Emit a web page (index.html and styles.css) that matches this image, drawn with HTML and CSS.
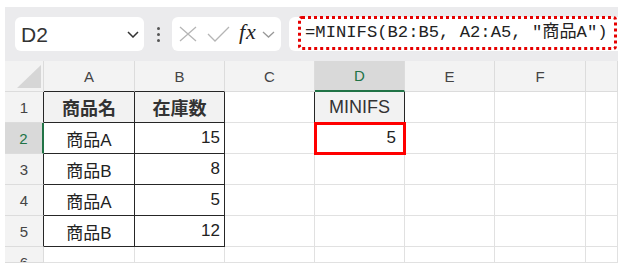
FILE: index.html
```html
<!DOCTYPE html>
<html lang="ja">
<head>
    <meta charset="UTF-8">
    <title>MINIFS</title>
    <link rel="stylesheet" href="styles.css">
</head>
<body>
    <div class="frame">
        <div class="toolbar">
            <div class="name-box">
                <span class="name-text">D2</span>
                <svg class="chev" width="12" height="7" viewBox="0 0 12 7"><path d="M1 1l5 5 5-5" fill="none" stroke="#333" stroke-width="1.5"/></svg>
            </div>
            <div class="dots"><i></i><i></i><i></i></div>
            <div class="fx-box">
                <svg width="20" height="16" viewBox="0 0 20 16"><path d="M2 1l16 14M18 1L2 15" fill="none" stroke="#b5b5b5" stroke-width="1.3"/></svg>
                <svg width="23" height="16" viewBox="0 0 23 16"><path d="M1 8l7 7L22 1" fill="none" stroke="#b5b5b5" stroke-width="1.3"/></svg>
                <span class="fx">fx</span>
                <svg width="13" height="7" viewBox="0 0 13 7"><path d="M1 1l5.5 5 5.5-5" fill="none" stroke="#999" stroke-width="1.3"/></svg>
            </div>
            <div class="formula-bar">
                <div class="formula">=MINIFS(B2:B5, A2:A5, "商品A")</div>
            </div>
        </div>

        <div class="sheet">
            <!-- 列見出し -->
            <div class="hd corner"><div class="tri"></div></div>
            <div class="hd dark-b">A</div>
            <div class="hd dark-b">B</div>
            <div class="hd">C</div>
            <div class="hd sel-col">D</div>
            <div class="hd">E</div>
            <div class="hd">F</div>
            <div class="hd"></div>

            <!-- 1行目 -->
            <div class="rh dark-r">1</div>
            <div class="c t head bold">商品名</div>
            <div class="c t head bold">在庫数</div>
            <div class="c dark-r"></div>
            <div class="c t head">MINIFS</div>
            <div class="c"></div>
            <div class="c"></div>
            <div class="c"></div>

            <!-- 2行目 -->
            <div class="rh sel-row">2</div>
            <div class="c t">商品A</div>
            <div class="c t num">15</div>
            <div class="c"></div>
            <div class="c num result">5</div>
            <div class="c"></div>
            <div class="c"></div>
            <div class="c"></div>

            <!-- 3行目 -->
            <div class="rh dark-r">3</div>
            <div class="c t">商品B</div>
            <div class="c t num">8</div>
            <div class="c"></div>
            <div class="c"></div>
            <div class="c"></div>
            <div class="c"></div>
            <div class="c"></div>

            <!-- 4行目 -->
            <div class="rh dark-r">4</div>
            <div class="c t">商品A</div>
            <div class="c t num">5</div>
            <div class="c"></div>
            <div class="c"></div>
            <div class="c"></div>
            <div class="c"></div>
            <div class="c"></div>

            <!-- 5行目 -->
            <div class="rh dark-r">5</div>
            <div class="c t">商品B</div>
            <div class="c t num">12</div>
            <div class="c"></div>
            <div class="c"></div>
            <div class="c"></div>
            <div class="c"></div>
            <div class="c"></div>

            <!-- 6行目 (途中まで) -->
            <div class="rh last">6</div>
            <div class="c"></div>
            <div class="c"></div>
            <div class="c"></div>
            <div class="c"></div>
            <div class="c"></div>
            <div class="c"></div>
            <div class="c"></div>
        </div>
    </div>
</body>
</html>
```

FILE: styles.css
```css
body {
    margin: 0;
    padding: 7px 0 0 5px;
    background-color: #ffffff;
    font-family: 'Liberation Sans', 'Noto Sans CJK JP', sans-serif;
    color: #222222;
}

.frame {
    width: 613px;
}

/* ツールバー */
.toolbar {
    display: flex;
    align-items: center;
    height: 54px;
    padding-left: 10px;
    background-color: #ebebed;
    box-sizing: border-box;
}

.name-box {
    display: flex;
    align-items: center;
    justify-content: space-between;
    width: 129px;
    height: 34px;
    padding: 0 5px 0 6px;
    background-color: #ffffff;
    border-radius: 6px;
    box-sizing: border-box;
}

.name-text {
    font-size: 21px;
    color: #333333;
    margin-top: 1px;
}

.dots {
    display: flex;
    flex-direction: column;
    gap: 3px;
    width: 28px;
    align-items: center;
}

.dots i {
    display: block;
    width: 3px;
    height: 3px;
    border-radius: 50%;
    background-color: #555555;
}

.fx-box {
    display: flex;
    align-items: center;
    gap: 9px;
    width: 109px;
    height: 34px;
    padding-left: 6px;
    background-color: #ffffff;
    border-radius: 6px;
    box-sizing: border-box;
}

.fx {
    font-family: 'Liberation Serif', serif;
    font-style: italic;
    font-size: 22px;
    color: #222222;
    margin: -4px -4px 0 0;
    letter-spacing: 1px;
}

.formula-bar {
    flex: 1;
    height: 34px;
    margin-left: 8px;
    padding-left: 9px;
    background-color: #ffffff;
    border-radius: 6px 0 0 6px;
    box-sizing: border-box;
}

.formula {
    height: 34px;
    margin-top: -1px;
    margin-right: 1px;
    padding-left: 4px;
    border: 3px dotted #e60000;
    border-radius: 4px;
    box-sizing: border-box;
    font-family: 'Liberation Mono', 'Noto Sans CJK JP', monospace;
    font-size: 17.2px;
    line-height: 27px;
    color: #222222;
    white-space: nowrap;
}

/* シート */
.sheet {
    display: grid;
    grid-template-columns: 39px 91px 90px 90px 90px 90px 91px 32px;
    grid-template-rows: repeat(6, 31px) 16px;
    background-color: #ffffff;
}

.hd,
.rh,
.c {
    display: flex;
    align-items: center;
    box-sizing: border-box;
    border-right: 1px solid #e1e1e1;
    border-bottom: 1px solid #e1e1e1;
    overflow: hidden;
}

.hd {
    justify-content: center;
    background-color: #f3f3f3;
    border-color: #dcdcdc;
    font-size: 15px;
    color: #444444;
}

.corner {
    justify-content: flex-end;
    align-items: flex-end;
    padding: 0 2px 3px 0;
}

.tri {
    width: 24px;
    height: 23px;
    background-color: #d6d6d6;
    clip-path: polygon(100% 0, 100% 100%, 0 100%);
}

.rh {
    justify-content: center;
    background-color: #f3f3f3;
    border-color: #dcdcdc;
    font-size: 15px;
    color: #444444;
}

.rh.last {
    align-items: flex-start;
    padding-top: 7px;
}

.c {
    justify-content: center;
    font-size: 17px;
}

.c.num {
    justify-content: flex-end;
    padding-right: 4px;
}

.c.bold {
    font-weight: bold;
    font-size: 18px;
    color: #000000;
}

.c.head {
    background-color: #f2f2f2;
    font-size: 18px;
    color: #333333;
}

.c.t {
    border-right-color: #262626;
    border-bottom-color: #262626;
}

.dark-b {
    border-bottom-color: #262626;
}

.dark-r {
    border-right-color: #262626;
}

/* 選択中のセル D2 */
.sel-col {
    background-color: #d9d9d9;
    color: #217346;
    border-bottom: 2px solid #217346;
}

.sel-row {
    background-color: #d9d9d9;
    color: #217346;
    border-right: 2px solid #217346;
}

.result {
    position: relative;
    outline: 3px solid #ff0000;
    outline-offset: -2px;
    padding-right: 8px !important;
}
```
